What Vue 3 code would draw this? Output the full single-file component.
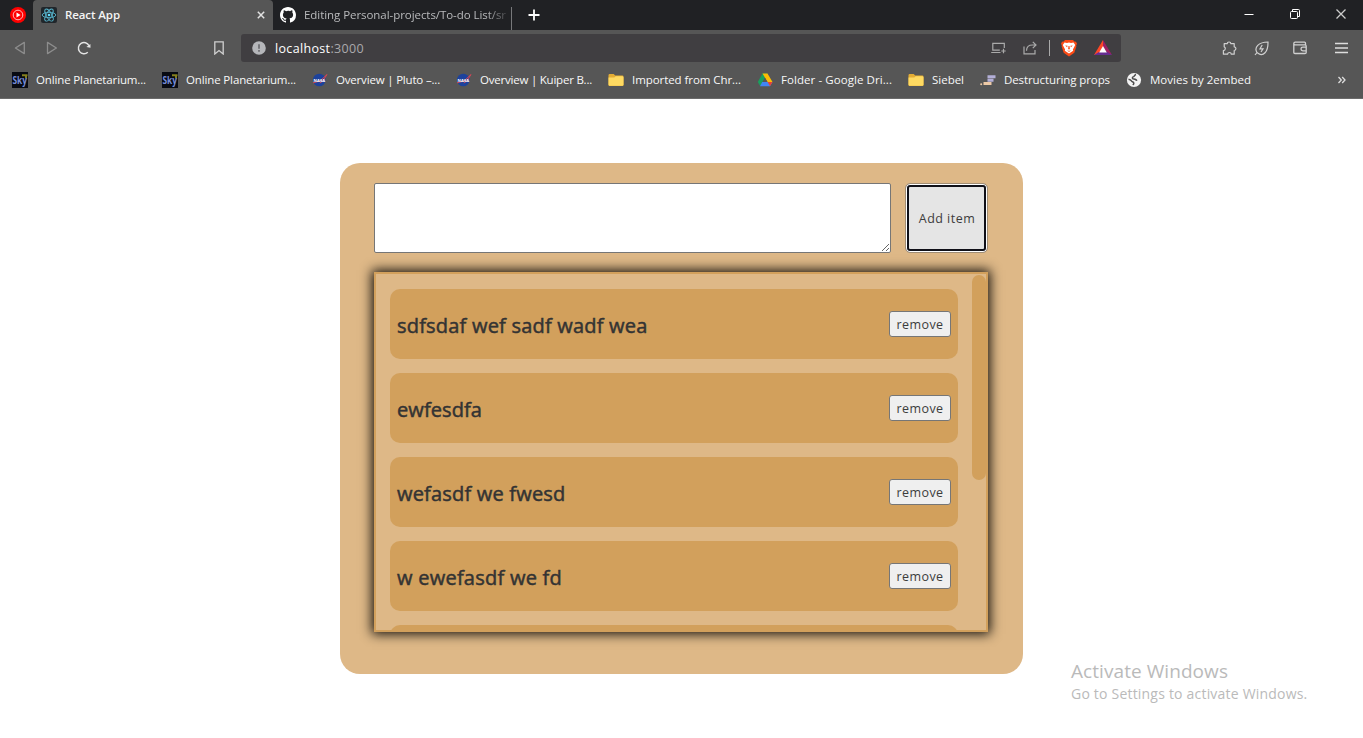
<script setup>
const bookmarks = [
  { icon: 'sky', label: 'Online Planetarium...', width: 110 },
  { icon: 'sky', label: 'Online Planetarium...', width: 110 },
  { icon: 'nasa', label: 'Overview | Pluto –...', width: 104 },
  { icon: 'nasa', label: 'Overview | Kuiper B...', width: 112 },
  { icon: 'folder', label: 'Imported from Chr...', width: 109 },
  { icon: 'drive', label: 'Folder - Google Dri...', width: 111 },
  { icon: 'folder', label: 'Siebel', width: 32 },
  { icon: 'props', label: 'Destructuring props', width: 106 },
  { icon: 'globe', label: 'Movies by 2embed', width: 101 },
]

const items = [
  { text: 'sdfsdaf wef sadf wadf wea', width: 250.5 },
  { text: 'ewfesdfa', width: 85 },
  { text: 'wefasdf we fwesd', width: 168.5 },
  { text: 'w ewefasdf we fd', width: 165 },
  { text: '', width: 0 },
]

// Tracks text so that a label occupies a given width.
const vFit = {
  mounted(el, { value }) {
    const count = el.textContent.length
    if (!count || !value) return
    const natural = el.getBoundingClientRect().width
    el.style.letterSpacing = `${(value - natural) / count}px`
  },
}
</script>

<template>
  <div class="screen">
    <header class="browser">
      <div class="tabs">
        <div class="pinned">
          <svg width="16" height="16" viewBox="0 0 16 16">
            <circle cx="8" cy="8" r="8" fill="#f00" />
            <circle cx="8" cy="8" r="4.8" fill="none" stroke="#ffb9b9" stroke-width="1" />
            <path d="M6.5 5.4 10.6 8l-4.1 2.6z" fill="#fff" />
          </svg>
        </div>
        <div class="tab active">
          <svg width="16" height="16" viewBox="0 0 16 16">
            <rect width="16" height="16" rx="2" fill="#20262b" />
            <g fill="none" stroke="#57b4cc" stroke-width=".9">
              <ellipse cx="8" cy="8" rx="6.8" ry="2.7" />
              <ellipse cx="8" cy="8" rx="6.8" ry="2.7" transform="rotate(60 8 8)" />
              <ellipse cx="8" cy="8" rx="6.8" ry="2.7" transform="rotate(120 8 8)" />
            </g>
            <circle cx="8" cy="8" r="1.3" fill="#61dafb" />
          </svg>
          <span class="title"><span v-fit="55" class="fit">React App</span></span>
          <svg class="close" width="8" height="8" viewBox="0 0 8 8">
            <path d="M.8.8 7.2 7.2M7.2.8.8 7.2" stroke="#e2e2e2" stroke-width="1.5" />
          </svg>
        </div>
        <div class="tab idle">
          <svg width="16" height="16" viewBox="0 0 16 16">
            <path fill="#fff" d="M8 0C3.58 0 0 3.58 0 8c0 3.54 2.29 6.53 5.47 7.59.4.07.55-.17.55-.38 0-.19-.01-.82-.01-1.49-2.01.37-2.53-.49-2.69-.94-.09-.23-.48-.94-.82-1.13-.28-.15-.68-.52-.01-.53.63-.01 1.08.58 1.23.82.72 1.21 1.87.87 2.33.66.07-.52.28-.87.51-1.07-1.78-.2-3.64-.89-3.64-3.95 0-.87.31-1.59.82-2.15-.08-.2-.36-1.02.08-2.12 0 0 .67-.21 2.2.82A7.7 7.7 0 0 1 8 3.86c.68 0 1.36.09 2 .27 1.53-1.04 2.2-.82 2.2-.82.44 1.1.16 1.92.08 2.12.51.56.82 1.27.82 2.15 0 3.07-1.87 3.75-3.65 3.95.29.25.54.73.54 1.48 0 1.07-.01 1.93-.01 2.2 0 .21.15.46.55.38A8 8 0 0 0 16 8c0-4.42-3.58-8-8-8z" />
          </svg>
          <span class="title"><span v-fit="202" class="fit">Editing Personal-projects/To-do List/sr</span></span>
        </div>
        <svg class="plus" width="12" height="12" viewBox="0 0 12 12">
          <path d="M6 .5v11M.5 6h11" stroke="#fff" stroke-width="1.8" />
        </svg>
        <div class="window-controls">
          <svg width="10" height="12" viewBox="0 0 10 12"><path d="M.5 6.5h9" stroke="#fff" /></svg>
          <svg width="12" height="12" viewBox="0 0 12 12" fill="none" stroke="#fff">
            <rect x="1.5" y="3.5" width="7" height="7" rx="1" />
            <path d="M3.5 3V1.5h6q1 0 1 1v6H9" />
          </svg>
          <svg width="12" height="12" viewBox="0 0 12 12"><path d="m1.5 1.5 9 9m0-9-9 9" stroke="#ccc" stroke-width="1.3" /></svg>
        </div>
      </div>

      <div class="toolbar">
        <div class="nav">
          <svg width="12" height="14" viewBox="0 0 12 14"><path d="M10.3 1.4v11.2L1.4 7z" fill="none" stroke="#8d8d8d" stroke-width="1.3" stroke-linejoin="round" /></svg>
          <svg width="12" height="14" viewBox="0 0 12 14"><path d="M1.5 1.4v11.2L10.4 7z" fill="none" stroke="#8d8d8d" stroke-width="1.3" stroke-linejoin="round" /></svg>
          <svg class="reload" width="14" height="14" viewBox="0 0 14 14">
            <path d="M10.8 11.3A5.6 5.6 0 1 1 12 4.6" fill="none" stroke="#e4e4e4" stroke-width="1.4" />
            <path d="m13.4 2.9.1 3.9-4.1-.8z" fill="#e4e4e4" />
          </svg>
          <svg class="mark" width="10" height="14" viewBox="0 0 10 14"><path d="M.8.9h8.4V13L5 9.5.8 13z" fill="none" stroke="#d0d0d0" stroke-width="1.3" /></svg>
        </div>
        <div class="address">
          <svg width="14" height="14" viewBox="0 0 14 14">
            <circle cx="7" cy="7" r="6.8" fill="#b5b6ba" />
            <path d="M7 3.3v4.5M7 9.1v1.7" stroke="#66666b" stroke-width="1.6" />
          </svg>
          <span class="url"><span v-fit="89" class="fit">localhost<i>:3000</i></span></span>
          <div class="address-icons">
            <svg width="15" height="12" viewBox="0 0 15 12" fill="none" stroke="#aaa" stroke-width="1.2">
              <path d="M13.3 6V1.4H1.8v6.8h7M.2 10.5h9.3M12.5 6.8v4.4M10.3 9h4.4" />
            </svg>
            <svg width="14" height="14" viewBox="0 0 14 14" fill="none" stroke="#aaa" stroke-width="1.2">
              <path d="M1 5.5v7.3h11V9M3.5 9.8c0-4.2 2.2-5.8 6-5.8H13M9.8.8 13 4 9.8 7.2" />
            </svg>
            <b class="divider"></b>
            <svg width="16" height="18" viewBox="0 0 16 18">
              <path d="M4 1h8l1.3 1.5 1.7.2 1 2-.8 1.7.2 1.2-2.1 6.1L8 17.6l-5.3-3.9L.6 7.6l.2-1.2L0 4.7l1-2 1.7-.2z" fill="#fb4b16" />
              <path d="m3.5 3.6 2.5.4L8 3.4l2 .6 2.5-.4 1.7 2.4-2.3 4.6.3 1.1L8 14.6l-4.2-2.9.3-1.1L1.8 6z" fill="#fff" />
              <path d="m4.2 6.4 2.4.4-.5 1.4zM11.8 6.4l-2.4.4.5 1.4zM7.5 7h1l.4 3-.9.6-.9-.6zM6 11l2 1 2-1-2 1.9z" fill="#fb4b16" />
            </svg>
            <svg width="18" height="16" viewBox="0 0 18 16">
              <path d="M9 0 0 15h4.5L9 7.2z" fill="#ff4726" />
              <path d="m9 0 9 15-4.6-2L9 7z" fill="#9e1f63" />
              <path d="M0 15h18l-4.6-3H5z" fill="#662d91" />
              <path d="m9 6 3.8 6.5H5.2z" fill="#fff" />
            </svg>
          </div>
        </div>
        <div class="extensions">
          <svg width="15" height="15" viewBox="0 0 15 15" fill="none" stroke="#d0d0d0" stroke-width="1.2">
            <path d="M2.2 2.7h3c.1-2.3 3.5-2.3 3.7 0h3.3v3.1c2.3.2 2.3 3.4 0 3.7v3.7H9.3c-.2-2.3-3.4-2.3-3.7 0H1.4V9.6c2.3-.2 2.5-3.4.8-3.8z" stroke-linejoin="round" />
          </svg>
          <svg class="leaf" width="15" height="15" viewBox="0 0 15 15" fill="none" stroke="#d0d0d0" stroke-width="1.2">
            <path d="M1 14 3 11.5C-.2 6.5 4.5 1 14 1c.2 10.3-5.1 14.5-9.2 11.7M3 11.5l1.8 1.2M8.2 4 6 7.8h3L7 11" />
          </svg>
          <svg class="wallet" width="14" height="14" viewBox="0 0 14 14" fill="none" stroke="#d0d0d0" stroke-width="1.3">
            <path d="M12.5 3.7V2.2q0-1-1-1H2.2q-1.4 0-1.4 1.3T2 3.8h10q1.2 0 1.2 1.2v6.5q0 1-1.2 1H2q-1.2 0-1.2-1.2V2.5M13 6.2H9.8Q8 6.2 8 8t1.8 1.8H13" />
          </svg>
          <svg class="menu" width="13" height="12" viewBox="0 0 13 12"><path d="M0 1.5h13M0 6h13M0 10.5h13" stroke="#ddd" stroke-width="1.3" /></svg>
        </div>
      </div>

      <div class="bookmarks">
        <div v-for="(mark, index) in bookmarks" :key="index" class="bookmark">
          <svg v-if="mark.icon === 'sky'" class="sky" width="16" height="16" viewBox="0 0 16 16">
            <rect width="16" height="16" fill="#080a12" />
            <path d="M10 3.2h5.5M14 3.2v3" stroke="#85801e" stroke-width="2" />
            <text x=".5" y="11.8" class="sky-text" textLength="14.5" lengthAdjust="spacingAndGlyphs">Sky</text>
          </svg>
          <svg v-else-if="mark.icon === 'nasa'" width="16" height="16" viewBox="0 0 16 16">
            <circle cx="7.3" cy="8" r="6.3" fill="#1d429c" />
            <path d="M1 10.8 8 9l7-6.5L10.8 9l-3 2" fill="none" stroke="#d34656" stroke-width="1" />
            <text x="1.6" y="9.6" class="nasa-text" textLength="11.5" lengthAdjust="spacingAndGlyphs">NASA</text>
          </svg>
          <svg v-else-if="mark.icon === 'folder'" width="16" height="16" viewBox="0 0 16 16">
            <path d="M.5 3.2q0-1.2 1.2-1.2h4l1.5 1.5h7.1q1.2 0 1.2 1.2v8q0 1.2-1.2 1.2H1.7q-1.2 0-1.2-1.2z" fill="#e4ad35" />
            <path d="M.5 5.5h5.8l1.4-1.2h6.6q1.2 0 1.2 1.2v7.2q0 1-1.2 1H1.7q-1.2 0-1.2-1.2z" fill="#ffda62" />
          </svg>
          <svg v-else-if="mark.icon === 'drive'" width="16" height="16" viewBox="0 0 16 16">
            <path d="M5.5 1.5H8l2.5 0L3.3 14.3.8 10z" fill="#18a05e" />
            <path d="M5.5 1.5h5l5 8.5h-5z" fill="#fbbc04" />
            <path d="M5.2 10h10.3l-2.5 4.3H3z" fill="#4285f4" />
            <path d="m10.6 10 4.9 0-2.5 4.3z" fill="#e94235" />
            <path d="m8 5.8 2.5 4.2h-5z" fill="#565656" />
          </svg>
          <svg v-else-if="mark.icon === 'props'" width="16" height="16" viewBox="0 0 16 16">
            <path d="M7.5 4.8h8M7.5 8.2h6" stroke="#b3afd7" stroke-width="3" />
            <path d="M3.5 11.5h8" stroke="#edc9a6" stroke-width="3" />
            <circle cx="1.2" cy="12.3" r="1" fill="#edc9a6" />
          </svg>
          <svg v-else width="16" height="16" viewBox="0 0 16 16">
            <circle cx="8" cy="8" r="7.1" fill="#f3f3f3" />
            <path d="M10 2.5C8.4 3 8.8 4 7.6 4.6 5.9 5.2 6 6.9 7.7 7.1c1.7.2 2.8.3 3 1.8M2.5 7.2c1.6.2 2.4.8 3.2 2 1 1.2 2.1.6 2.1 2 0 1-.6 1.2-.7 2" fill="none" stroke="#4d4d4d" stroke-width="1.5" />
          </svg>
          <span class="bookmark-label" :style="{ width: mark.width + 'px' }"><span v-fit="mark.width" class="fit">{{ mark.label }}</span></span>
        </div>
        <svg class="more" width="8" height="8" viewBox="0 0 8 8"><path d="m.5 1 2.8 3L.5 7M4.2 1 7 4 4.2 7" fill="none" stroke="#ddd" stroke-width="1.3" /></svg>
      </div>
    </header>

    <main class="page">
      <section class="card">
        <div class="entry">
          <textarea class="field"></textarea>
          <button class="add"><span v-fit="56.5" class="fit">Add item</span></button>
        </div>
        <div class="list">
          <div class="items">
            <div v-for="(item, index) in items" :key="index" class="item">
              <template v-if="item.text">
                <span v-fit="item.width" class="fit item-text">{{ item.text }}</span>
                <button class="remove"><span v-fit="47" class="fit">remove</span></button>
              </template>
            </div>
          </div>
          <div class="track"><div class="thumb"></div></div>
        </div>
      </section>
      <aside class="watermark">
        <div class="mark-title"><span v-fit="157" class="fit">Activate Windows</span></div>
        <div class="mark-text"><span v-fit="236.5" class="fit">Go to Settings to activate Windows.</span></div>
      </aside>
    </main>
  </div>
</template>

<style>
body {
  margin: 0;
  overflow: hidden;
}
</style>

<style scoped>
* {
  box-sizing: border-box;
}
svg {
  display: block;
  flex: none;
}
.screen {
  width: 1363px;
  height: 738px;
  overflow: hidden;
  background: #fff;
  font-family: "Open Sans", "Noto Sans", sans-serif;
}
.fit {
  display: inline-block;
  white-space: pre;
}
.browser {
  height: 99px;
  background: #565656;
  border-bottom: 1px solid #6b6b6b;
}
.tabs {
  display: flex;
  align-items: center;
  height: 30px;
  background: #202124;
}
.pinned {
  width: 33px;
  padding-left: 10px;
}
.tab {
  display: flex;
  align-items: center;
  height: 30px;
  font-size: 11.5px;
}
.title {
  margin-bottom: 2px;
}
.active {
  width: 240px;
  padding: 0 8px;
  border-radius: 4px 4px 0 0;
  background: #565656;
  color: #f4f4f4;
  font-weight: 600;
}
.active .title {
  margin-left: 8px;
}
.close {
  margin-left: auto;
}
.idle {
  width: 239px;
  padding-left: 7px;
  color: #b9babc;
}
.idle::after {
  content: "";
  width: 1px;
  height: 23px;
  margin: 7px 0 0 5px;
  background: #77787a;
}
.idle .title {
  width: 203px;
  margin-left: 8px;
  -webkit-mask-image: linear-gradient(90deg, #000 182px, transparent 208px);
  mask-image: linear-gradient(90deg, #000 182px, transparent 208px);
}
.plus {
  margin-left: 16px;
}
.window-controls {
  display: flex;
  align-items: center;
  gap: 34px;
  margin: -2px 16px 0 auto;
}
.window-controls svg:first-child {
  margin-right: 1px;
}
.toolbar {
  display: flex;
  align-items: center;
  height: 36px;
}
.nav {
  display: flex;
  align-items: center;
  width: 241px;
  padding-left: 14px;
  gap: 20px;
}
.reload {
  margin-left: -1px;
}
.nav .mark {
  margin-left: 103px;
}
.address {
  display: flex;
  align-items: center;
  width: 880px;
  height: 28px;
  padding: 0 9px 0 11px;
  border-radius: 3px;
  background: #403e41;
}
.url {
  margin-left: 9px;
  color: #fff;
  font-size: 12.5px;
}
.url i {
  color: #aaa9ac;
  font-style: normal;
}
.address-icons {
  display: flex;
  align-items: center;
  margin-left: auto;
}
.address-icons svg:nth-child(2) {
  margin-left: 17px;
}
.divider {
  width: 1px;
  height: 16px;
  margin: 0 11px 0 12px;
  background: #aaa;
}
.address-icons svg:last-child {
  margin-left: 17px;
}
.extensions {
  display: flex;
  align-items: center;
  margin-left: 101px;
}
.leaf {
  margin-left: 17px;
}
.wallet {
  margin-left: 24px;
}
.menu {
  margin-left: 28px;
}
.bookmarks {
  display: flex;
  align-items: center;
  height: 28px;
  gap: 16px;
  padding: 0 17px 0 12px;
}
.bookmark {
  display: flex;
  align-items: center;
  gap: 8px;
  color: #f8f8f8;
  font-size: 11.5px;
  line-height: 16px;
}
.sky {
  overflow: visible;
}
.sky-text {
  fill: #768cd8;
  font: bold 10px "Open Sans", sans-serif;
}
.nasa-text {
  fill: #fff;
  font: bold 4px "Open Sans", sans-serif;
}
.more {
  margin-left: auto;
}
.page {
  display: flex;
  position: relative;
  justify-content: center;
  height: 639px;
  padding-top: 64px;
}
.card {
  width: 683px;
  height: 511px;
  padding: 20px 35px 0 34px;
  border-radius: 20px;
  background: #deb887;
}
.entry {
  display: flex;
  gap: 14px;
}
.field {
  width: 517px;
  height: 70px;
  margin: 0;
  border: 1px solid #767676;
  border-radius: 2px;
  background: #fff;
  resize: both;
}
.add {
  width: 83px;
  height: 70px;
  padding: 0 0 0 1px;
  border: 1px solid #a08d75;
  border-radius: 5px;
  box-shadow: inset 0 0 0 1px #fff, inset 0 0 0 3px #101018;
  background: #e5e5e5;
  color: #3c3c3c;
  font: 12.5px "Open Sans", "Noto Sans", sans-serif;
}
.list {
  display: flex;
  width: 614px;
  height: 360px;
  margin-top: 19px;
  overflow: hidden;
  border: 2px solid #d2a05c;
  box-shadow: 0 0 11px 2px rgba(0, 0, 0, 0.92);
}
.items {
  width: 596px;
  padding: 15px 14px 0;
}
.item {
  display: flex;
  align-items: center;
  justify-content: space-between;
  width: 568px;
  height: 70px;
  margin-bottom: 14px;
  padding: 0 7px;
  border-radius: 10px;
  background: #d2a05c;
  color: #333;
}
.item-text {
  padding-top: 3px;
  font-size: 20px;
  font-weight: 400;
  line-height: 28px;
  -webkit-text-stroke: 0.5px #333;
}
.remove {
  width: 62px;
  height: 26px;
  padding: 0;
  border: 1px solid #767676;
  border-radius: 3px;
  background: #efefef;
  color: #3c3c3c;
  font: 12.5px "Open Sans", "Noto Sans", sans-serif;
}
.track {
  width: 14px;
  padding-top: 1px;
}
.thumb {
  height: 205px;
  border-radius: 7px;
  background: #d2a05c;
}
.watermark {
  position: absolute;
  top: 559px;
  left: 1071px;
  color: #bababa;
}
.mark-title {
  font-size: 19px;
  line-height: 26px;
}
.mark-text {
  font-size: 14px;
  line-height: 20px;
}
</style>
